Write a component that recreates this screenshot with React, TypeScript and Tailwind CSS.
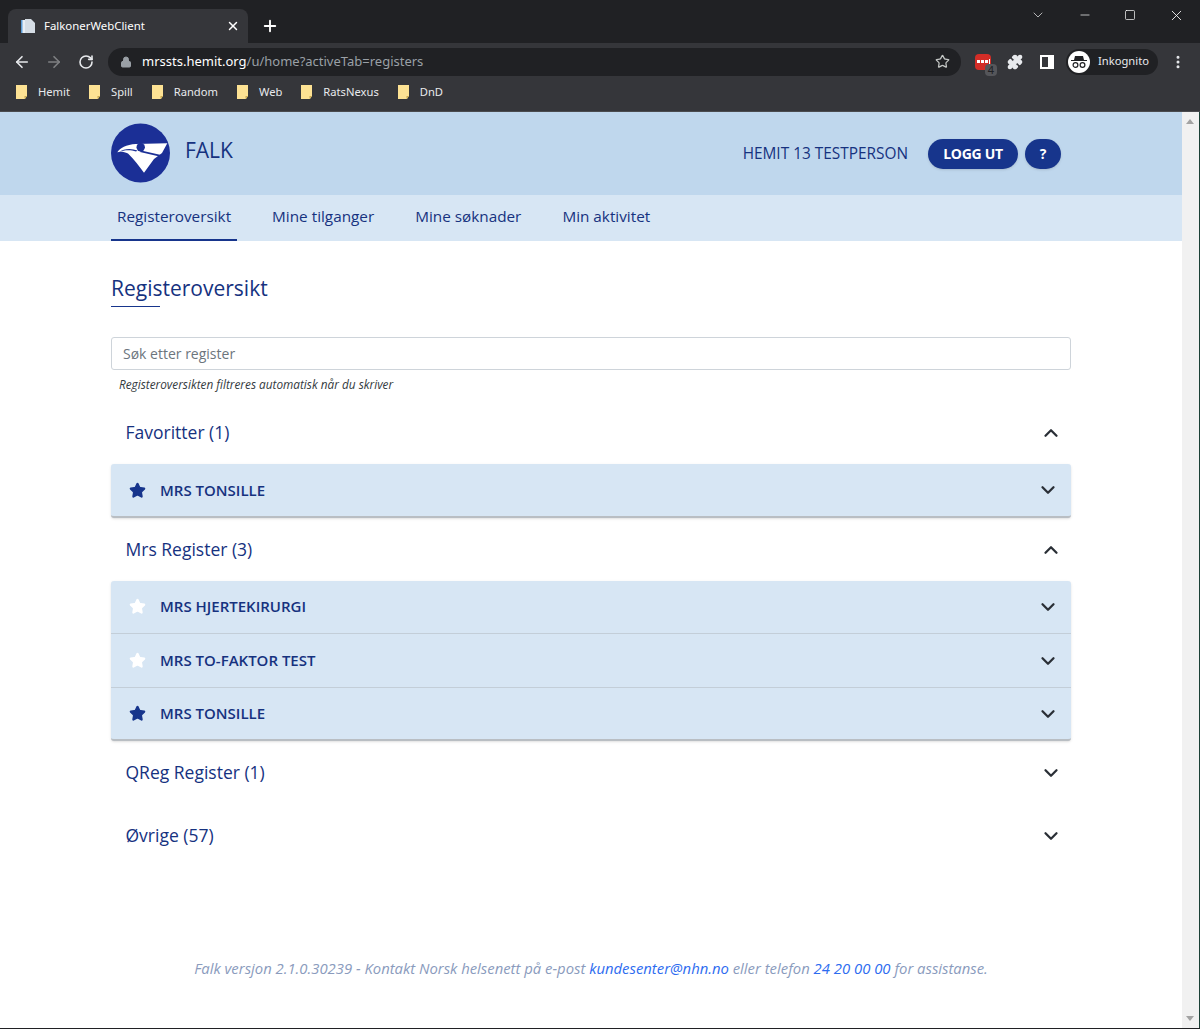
import { ChevronDown, ChevronUp, Star, ArrowLeft, ArrowRight, RotateCw, Lock, X, Plus, Minus, Square, Puzzle, MoreVertical } from "lucide-react";

const bookmarks = ["Hemit", "Spill", "Random", "Web", "RatsNexus", "DnD"];

const navItems = ["Registeroversikt", "Mine tilganger", "Mine søknader", "Min aktivitet"];

const FolderIcon = () => (
  <svg width="11" height="14" viewBox="0 0 11 14">
    <path d="M0 0h11v11l-2 3H0z" fill="#fde293" />
    <path d="M8.5 14v-3H11z" fill="#c9a94f" />
  </svg>
);

const FalkLogo = () => (
  <svg width="60" height="60" viewBox="0 0 60 60" className="shrink-0 mb-[2px]">
    <circle cx="29.5" cy="30" r="29.5" fill="#1b2f96" />
    <path
      d="M6.3 29.3 C9 25 15 21.5 25 21 L56.3 20.3 L51 30 L43 36 L33 49.7 C28 43 23 36 17 30.5 C13 28.5 9 28.5 6.3 29.3 Z"
      fill="#fff"
    />
    <circle cx="29.7" cy="24.3" r="4.2" fill="#1b2f96" />
    <path d="M30 27.5 L50 32 L48.5 33.5 L29 29 Z" fill="#1b2f96" />
    <path d="M8 29 C14 26.5 20 27 25 28.5 L26.5 27.5 C20 25 13 25.5 8 29 Z" fill="#1b2f96" />
  </svg>
);

const FavStar = ({ on }: { on: boolean }) => (
  <Star size={17} className={`shrink-0 ${on ? "text-[#17358c]" : "text-white"}`} fill="currentColor" strokeWidth={2} />
);

const RegisterRow = ({ name, on, className }: { name: string; on: boolean; className: string }) => (
  <div className={`flex items-center pl-[18px] pr-[12px] ${className}`}>
    <FavStar on={on} />
    <span className="ml-[14px] flex-1 text-[15px] font-semibold text-[#16327f]">{name}</span>
    <ChevronDown size={22} strokeWidth={2.5} className="text-[#2a2f36]" />
  </div>
);

const SectionHead = ({ title, open }: { title: string; open: boolean }) => (
  <div className="flex items-center justify-between h-[63px] pl-[14.5px] pr-[9px]">
    <span className="text-[17.5px] text-[#16327f]">{title}</span>
    {open ? (
      <ChevronUp size={22} strokeWidth={2.5} className="text-[#2a2f36]" />
    ) : (
      <ChevronDown size={22} strokeWidth={2.5} className="text-[#2a2f36]" />
    )}
  </div>
);

const RowGroup = ({ children }: { children: React.ReactNode }) => (
  <div className="rounded-[3px] bg-[#d7e6f4] border-b-2 border-[#b9bec3] shadow-sm">{children}</div>
);

export default function App() {
  return (
    <div className="h-[1029px] w-[1200px] overflow-hidden flex flex-col bg-white font-['Open_Sans',sans-serif]">
      {/* browser chrome */}
      <div className="h-[112px] shrink-0 bg-[#35363a] font-['Noto_Sans',sans-serif] text-white border-b border-[#4a4b4f]">
        <div className="h-[43px] bg-[#202124] flex items-end pl-2">
          <div className="h-[34px] w-[240px] rounded-t-lg bg-[#35363a] flex items-center pl-3 pr-[8px]">
            <svg width="16" height="16" viewBox="0 0 16 16">
              <path d="M1 2h4v13H1z" fill="#e8eef5" />
              <path d="M1 2h1.5v13H1z" fill="#5b9bd5" />
              <path d="M5 1h6l4 4v10H5z" fill="#d5dde5" />
            </svg>
            <span className="ml-2 flex-1 text-[11.4px]">FalkonerWebClient</span>
            <X size={14} strokeWidth={2.5} />
          </div>
          <Plus size={18} strokeWidth={2.5} className="ml-[13px] mb-[8px]" />
          <div className="flex-1 self-start flex items-center justify-end h-[30px] text-white">
            <ChevronDown size={16} strokeWidth={1} className="mr-[32px]" />
            <Minus size={14} strokeWidth={1.2} className="mr-[32px]" />
            <Square size={12} strokeWidth={1.4} className="mr-[32px]" />
            <X size={17} strokeWidth={1.2} className="mr-[15px]" />
          </div>
        </div>
        <div className="h-[37px] flex items-center pl-[13px]">
          <ArrowLeft size={18} strokeWidth={2.2} className="text-[#e8eaed]" />
          <ArrowRight size={18} strokeWidth={2.2} className="ml-[14px] text-[#7f8083]" />
          <RotateCw size={16} strokeWidth={2.4} className="ml-[15px] text-[#e8eaed]" />
          <div className="ml-[14px] h-[28px] w-[853px] rounded-full bg-[#202124] flex items-center pl-3 pr-[11px]">
            <Lock size={12} fill="currentColor" className="text-[#9aa0a6]" />
            <span className="ml-[10px] flex-1 text-[13px]">
              mrssts.hemit.org<span className="text-[#9aa0a6]">/u/home?activeTab=registers</span>
            </span>
            <Star size={15} className="text-[#c4c7c5]" />
          </div>
          <div className="relative ml-[14px] h-4 w-4 rounded-sm bg-[#d32d27] flex items-center pl-[2px] pb-[1px] gap-[1px]">
            <span className="h-[3px] w-[3px] bg-white" />
            <span className="h-[3px] w-[3px] bg-white" />
            <span className="h-[3px] w-[3px] bg-white" />
            <span className="h-[5px] w-[1px] bg-white" />
            <span className="absolute -bottom-[6px] -right-[6px] h-3 w-3 rounded-sm bg-[#55565a] text-[11px] leading-3 text-center text-[#202124]">4</span>
          </div>
          <Puzzle size={16} fill="currentColor" className="ml-[16px] text-[#e8eaed]" />
          <div className="ml-[17px] h-[14px] w-[14px] border-[2px] border-white border-r-[6px]" />
          <div className="ml-[12px] h-[26px] w-[92px] rounded-full bg-[#202124] flex items-center pl-[2px]">
            <div className="h-[22px] w-[22px] rounded-full bg-white flex items-center justify-center">
              <svg width="16" height="14" viewBox="0 0 16 14">
                <path d="M4 1h8l1 4h3v1H0V5h3z" fill="#202124" />
                <circle cx="4.5" cy="10" r="2.4" fill="none" stroke="#202124" strokeWidth="1.2" />
                <circle cx="11.5" cy="10" r="2.4" fill="none" stroke="#202124" strokeWidth="1.2" />
              </svg>
            </div>
            <span className="ml-[8px] text-[11.2px] text-[#e8eaed]">Inkognito</span>
          </div>
          <MoreVertical size={16} strokeWidth={2.5} className="ml-[12px] text-[#e8eaed]" />
        </div>
        <div className="h-[24px] flex items-center pl-4 gap-[19px] text-[11.2px] text-[#e8eaed]">
          {bookmarks.map((b) => (
            <div key={b} className="flex items-center gap-[11px]">
              <FolderIcon />
              <span>{b}</span>
            </div>
          ))}
        </div>
      </div>

      {/* page + scrollbar */}
      <div className="flex-1 flex min-h-0">
        <div className="flex-1 flex flex-col min-w-0">
          <header className="h-[83px] bg-[#bfd7ed] shrink-0">
            <div className="w-[960px] ml-[111px] h-full flex items-center">
              <FalkLogo />
              <span className="ml-[14px] mb-[6px] text-[21px] text-[#16327f]">FALK</span>
              <span className="ml-auto text-[15.4px] text-[#16327f]">HEMIT 13 TESTPERSON</span>
              <button className="ml-[20px] h-[30px] w-[90px] rounded-full bg-[#17358c] text-[14px] font-bold tracking-[-0.3px] text-white shadow">
                LOGG UT
              </button>
              <button className="ml-[7px] mr-[10px] h-[30px] w-[36px] rounded-full bg-[#17358c] text-[14px] font-bold text-white shadow">
                ?
              </button>
            </div>
          </header>
          <nav className="h-[46px] bg-[#d7e6f4] shrink-0">
            <div className="ml-[111px] h-full flex gap-[29px]">
              {navItems.map((item, i) => (
                <div
                  key={item}
                  className={`h-full px-[6px] pb-[2px] flex items-center text-[15.3px] font-medium text-[#16327f] ${
                    i === 0 ? "border-b-2 border-[#17358c]" : "border-b-2 border-transparent"
                  }`}
                >
                  {item}
                </div>
              ))}
            </div>
          </nav>

          <main className="w-[960px] ml-[111px] flex-1 flex flex-col">
            <h1 className="mt-[32px] text-[21px] leading-[30px] text-[#16327f]">Registeroversikt</h1>
            <div className="mt-[3px] h-px w-[49px] bg-[#17358c]" />
            <input
              placeholder="Søk etter register"
              className="mt-[30px] h-[33px] w-full rounded-[3px] border border-[#ced4da] px-[11px] text-[14px] placeholder:text-[#6c757d]"
            />
            <p className="mt-[7px] ml-2 text-[11.8px] italic leading-[15px] text-[#343a40]">
              Registeroversikten filtreres automatisk når du skriver
            </p>
            <div className="mt-[9px]">
              <SectionHead title="Favoritter (1)" open />
            </div>
            <RowGroup>
              <RegisterRow name="MRS TONSILLE" on className="h-[52px]" />
            </RowGroup>
            <SectionHead title="Mrs Register (3)" open />
            <RowGroup>
              <RegisterRow name="MRS HJERTEKIRURGI" on={false} className="h-[53px] pb-[1px] border-b border-[#c3ced8]" />
              <RegisterRow name="MRS TO-FAKTOR TEST" on={false} className="h-[54px] border-b border-[#c3ced8]" />
              <RegisterRow name="MRS TONSILLE" on className="h-[51px]" />
            </RowGroup>
            <SectionHead title="QReg Register (1)" open={false} />
            <SectionHead title="Øvrige (57)" open={false} />
            <p className="mt-[90px] text-center text-[14.85px] italic text-[#8a9bbd]">
              Falk versjon 2.1.0.30239 - Kontakt Norsk helsenett på e-post{" "}
              <span className="text-[#2d6cf0]">kundesenter@nhn.no</span> eller telefon{" "}
              <span className="text-[#2d6cf0]">24 20 00 00</span> for assistanse.
            </p>
          </main>
        </div>
        <div className="w-[18px] shrink-0 bg-[#f1f1f1] border-r border-[#1b4036] flex flex-col items-center justify-between py-[7px] pr-[1px]">
          <svg width="8" height="5" viewBox="0 0 8 5">
            <path d="M4 0l4 5H0z" fill="#a3a3a3" />
          </svg>
          <svg width="8" height="5" viewBox="0 0 8 5">
            <path d="M0 0h8L4 5z" fill="#a3a3a3" />
          </svg>
        </div>
      </div>
      <div className="h-px shrink-0 bg-[#202124]" />
    </div>
  );
}
